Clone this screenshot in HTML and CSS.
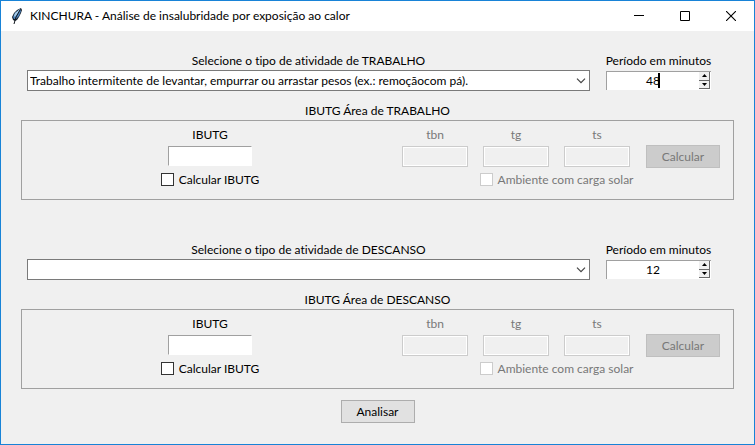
FILE: index.html
```html
<!DOCTYPE html>
<html lang="pt-BR">
<head>
<meta charset="utf-8">
<meta name="viewport" content="width=device-width, initial-scale=1">
<title>KINCHURA - Análise de insalubridade por exposição ao calor</title>
<link rel="stylesheet" href="styles.css">
</head>
<body>
<div class="window">
  <header class="titlebar">
    <svg class="feather" width="12" height="18" viewBox="0 0 12 18" aria-hidden="true">
      <path d="M10 1 L11 3 L10 6 L8 10 L6 13 L4 14 L2 13 L1 10 L3 6 L6 3 Z" fill="#16202c"/>
      <path d="M9 2 L10 4 L8 9 L5 12 L3 12 L2 10 L4 6 Z" fill="#4b82bd"/>
      <path d="M9 2 L7 6 L4 10 L3 9 L4 6 Z" fill="#a6cdec"/>
      <path d="M9 3 L5 10 L3 17" fill="none" stroke="#10151c" stroke-width="1"/>
    </svg>
    <h1 class="title">KINCHURA - Análise de insalubridade por exposição ao calor</h1>
    <div class="controls">
      <button class="control" type="button" aria-label="Minimizar"><svg width="10" height="10" viewBox="0 0 10 10"><path d="M0 4.5H10" stroke="#000"/></svg></button>
      <button class="control" type="button" aria-label="Maximizar"><svg width="10" height="10" viewBox="0 0 10 10"><path d="M.5 .5H9.5V9.5H.5Z" fill="none" stroke="#000"/></svg></button>
      <button class="control" type="button" aria-label="Fechar"><svg width="10" height="10" viewBox="0 0 10 10"><path d="M0 0L10 10M10 0L0 10" stroke="#000" stroke-width="1.1"/></svg></button>
    </div>
  </header>

  <main class="content">
    <section class="area">
      <div class="activity">
        <div class="field field-grow">
          <label class="label" for="work-type">Selecione o tipo de atividade de TRABALHO</label>
          <div class="combo">
            <select class="select" id="work-type">
              <option>Trabalho intermitente de levantar, empurrar ou arrastar pesos (ex.: remoçãocom pá).</option>
            </select>
            <svg class="chevron" width="10" height="6" viewBox="0 0 10 6" aria-hidden="true"><path d="M1 .7L5 4.7L9 .7" fill="none" stroke="#444" stroke-width="1.2"/></svg>
          </div>
        </div>
        <div class="field">
          <label class="label" for="work-minutes">Período em minutos</label>
          <div class="spin">
            <input class="number" id="work-minutes" type="number" value="48">
            <span class="caret"></span>
            <div class="steps">
              <button class="step" type="button" aria-label="Aumentar"><svg width="5" height="3" viewBox="0 0 5 3"><path d="M0 3L2.5 0L5 3Z"/></svg></button>
              <button class="step" type="button" aria-label="Diminuir"><svg width="5" height="3" viewBox="0 0 5 3"><path d="M0 0L2.5 3L5 0Z"/></svg></button>
            </div>
          </div>
        </div>
      </div>
      <h2 class="heading">IBUTG Área de TRABALHO</h2>
      <div class="panel">
        <div class="index">
          <label class="label" for="work-ibutg">IBUTG</label>
          <input class="text" id="work-ibutg" type="text">
          <label class="check"><input class="box" type="checkbox">Calcular IBUTG</label>
        </div>
        <div class="readings">
          <label class="label muted" for="work-tbn">tbn</label>
          <label class="label muted" for="work-tg">tg</label>
          <label class="label muted" for="work-ts">ts</label>
          <input class="reading" id="work-tbn" type="text" disabled>
          <input class="reading" id="work-tg" type="text" disabled>
          <input class="reading" id="work-ts" type="text" disabled>
          <button class="button calculate" type="button" disabled>Calcular</button>
          <label class="check solar muted"><input class="box" type="checkbox" disabled>Ambiente com carga solar</label>
        </div>
      </div>
    </section>

    <section class="area">
      <div class="activity">
        <div class="field field-grow">
          <label class="label" for="rest-type">Selecione o tipo de atividade de DESCANSO</label>
          <div class="combo">
            <select class="select" id="rest-type">
              <option></option>
            </select>
            <svg class="chevron" width="10" height="6" viewBox="0 0 10 6" aria-hidden="true"><path d="M1 .7L5 4.7L9 .7" fill="none" stroke="#444" stroke-width="1.2"/></svg>
          </div>
        </div>
        <div class="field">
          <label class="label" for="rest-minutes">Período em minutos</label>
          <div class="spin">
            <input class="number" id="rest-minutes" type="number" value="12">
            <div class="steps">
              <button class="step" type="button" aria-label="Aumentar"><svg width="5" height="3" viewBox="0 0 5 3"><path d="M0 3L2.5 0L5 3Z"/></svg></button>
              <button class="step" type="button" aria-label="Diminuir"><svg width="5" height="3" viewBox="0 0 5 3"><path d="M0 0L2.5 3L5 0Z"/></svg></button>
            </div>
          </div>
        </div>
      </div>
      <h2 class="heading">IBUTG Área de DESCANSO</h2>
      <div class="panel">
        <div class="index">
          <label class="label" for="rest-ibutg">IBUTG</label>
          <input class="text" id="rest-ibutg" type="text">
          <label class="check"><input class="box" type="checkbox">Calcular IBUTG</label>
        </div>
        <div class="readings">
          <label class="label muted" for="rest-tbn">tbn</label>
          <label class="label muted" for="rest-tg">tg</label>
          <label class="label muted" for="rest-ts">ts</label>
          <input class="reading" id="rest-tbn" type="text" disabled>
          <input class="reading" id="rest-tg" type="text" disabled>
          <input class="reading" id="rest-ts" type="text" disabled>
          <button class="button calculate" type="button" disabled>Calcular</button>
          <label class="check solar muted"><input class="box" type="checkbox" disabled>Ambiente com carga solar</label>
        </div>
      </div>
    </section>

    <button class="button analyze" type="button">Analisar</button>
  </main>
</div>
</body>
</html>
```
FILE: styles.css
```css
* {
  box-sizing: border-box;
}

body,
input,
select,
button {
  margin: 0;
  font-family: Lato, "Noto Sans", sans-serif;
  font-size: 12px;
  font-variant-ligatures: none;
  line-height: 18px;
  color: #000;
}

.window {
  display: flex;
  flex-direction: column;
  min-height: 100vh;
  border: 1px solid #1883d7;
  background: #f0f0f0;
}

.titlebar {
  display: flex;
  align-items: center;
  height: 30px;
  padding-left: 10px;
  background: #fff;
}

.title {
  flex: 1;
  margin: 0 0 0 7px;
  font-size: 12px;
  font-weight: 400;
  white-space: nowrap;
}

.controls {
  display: flex;
}

.control {
  display: flex;
  align-items: center;
  justify-content: center;
  width: 46px;
  height: 28px;
  padding: 0;
  border: 0;
  background: none;
}

.content {
  display: flex;
  flex-direction: column;
  padding: 20px 20px 0;
}

.area {
  margin-bottom: 40px;
}

.area:last-of-type {
  margin-bottom: 11px;
}

.activity {
  display: flex;
  gap: 16px;
  padding: 0 23px 0 6px;
}

.field {
  display: flex;
  flex-direction: column;
  width: 105px;
}

.field-grow {
  flex: 1;
}

.label {
  height: 19px;
  text-align: center;
  white-space: nowrap;
}

.field .label {
  align-self: center;
  line-height: 20px;
}

.muted {
  color: #787878;
}

.combo {
  position: relative;
}

.select {
  display: block;
  width: 100%;
  height: 21px;
  padding: 0 20px 0 2px;
  border: 1px solid #7a7a7a;
  border-radius: 0;
  background: #fff;
  appearance: none;
}

.chevron {
  position: absolute;
  top: 8px;
  right: 4px;
  pointer-events: none;
}

.spin {
  position: relative;
  display: flex;
  height: 19px;
  margin-top: 1px;
  border-top: 1px solid #a0a0a0;
  border-left: 1px solid #a0a0a0;
  background: #fff;
}

.number {
  flex: 1;
  min-width: 0;
  padding: 0;
  border: 0;
  outline: 0;
  background: none;
  text-align: center;
  appearance: textfield;
}

.number::-webkit-inner-spin-button {
  display: none;
}

.caret {
  position: absolute;
  top: 1px;
  left: 51px;
  width: 2px;
  height: 15px;
  background: #000;
}

.steps {
  display: flex;
  flex-direction: column;
  width: 11px;
  height: 17px;
  margin-right: 1px;
}

.step {
  display: flex;
  flex: 1;
  align-items: center;
  justify-content: center;
  padding: 0;
  border: 0;
  border-right: 1px solid #696969;
  border-bottom: 1px solid #696969;
  background: #f0f0f0;
}

.heading {
  height: 20px;
  margin: 9px 0 0;
  font-size: 12px;
  font-weight: 400;
  line-height: 22px;
  text-align: center;
}

.panel {
  display: flex;
  height: 80px;
  padding: 5px 13px 0 0;
  border: 1px solid #a0a0a0;
}

.index {
  display: flex;
  flex: 1;
  flex-direction: column;
  align-items: center;
  padding-right: 4px;
}

.text {
  width: 84px;
  height: 20px;
  margin: 1px 0;
  border: 1px solid #fff;
  border-top-color: #a0a0a0;
  border-left-color: #a0a0a0;
}

.readings {
  display: grid;
  grid-template-columns: 66px 66px 66px 75px;
  grid-template-rows: 19px 22px 19px;
  align-content: start;
  column-gap: 15px;
}

.reading {
  grid-row: 2;
  align-self: end;
  width: 66px;
  height: 21px;
  border: 1px solid #ccc;
  box-shadow: inset 0 0 0 1px #fff;
  background: #f0f0f0;
}

.button {
  width: 74px;
  height: 23px;
  padding: 0;
  border: 1px solid #adadad;
  background: #e1e1e1;
}

.button:disabled {
  border-color: #bfbfbf;
  background: #ccc;
  color: #787878;
}

.calculate {
  grid-area: 2 / 4;
  justify-self: end;
}

.check {
  display: flex;
  align-items: center;
  gap: 5px;
  height: 25px;
  white-space: nowrap;
}

.box {
  width: 13px;
  height: 13px;
  border: 1px solid #333;
  background: #fff;
  appearance: none;
}

.box:disabled {
  border-color: #ccc;
}

.solar {
  grid-area: 3 / 2 / 4 / 4;
  justify-self: center;
}

.analyze {
  align-self: center;
}
```
